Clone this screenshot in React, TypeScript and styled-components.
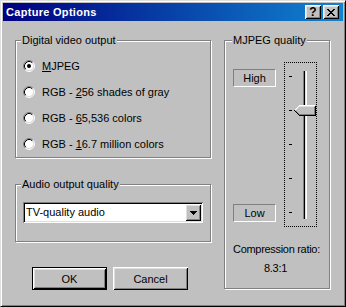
import React from "react";
import styled, { createGlobalStyle } from "styled-components";

const GlobalStyle = createGlobalStyle`
  html, body {
    margin: 0;
    padding: 0;
    background: #c0c0c0;
  }
  body {
    font-family: "Liberation Sans", Arial, sans-serif;
    font-size: 11px;
  }
`;

const raised = `
  box-shadow: inset 1px 1px #fff, inset -1px -1px #000, inset 2px 2px #dfdfdf,
    inset -2px -2px #808080;
`;

const sunken = `
  box-shadow: inset 1px 1px #808080, inset -1px -1px #fff, inset 2px 2px #000,
    inset -2px -2px #dfdfdf;
`;

const Window = styled.div`
  box-sizing: border-box;
  width: 346px;
  height: 307px;
  padding: 2px;
  background: #c0c0c0;
  border: 1px solid;
  border-color: #dfdfdf #000 #000 #dfdfdf;
  box-shadow: inset 1px 1px #fff, inset -1px -1px #808080;
  display: flex;
  flex-direction: column;
  color: #000;
  font-family: "Liberation Sans", Arial, sans-serif;
  font-size: 11px;
`;

const TitleBar = styled.div`
  height: 18px;
  flex-shrink: 0;
  display: flex;
  align-items: center;
  gap: 2px;
  padding: 0 4px 0 3px;
  background: linear-gradient(to right, #000080, #1084d0);
`;

const TitleText = styled.div`
  flex: 1;
  color: #fff;
  font-weight: bold;
  font-size: 11px;
  letter-spacing: 0.3px;
  line-height: 18px;
  white-space: nowrap;
`;

const CaptionButton = styled.div`
  box-sizing: border-box;
  width: 16px;
  height: 14px;
  background: #c0c0c0;
  ${raised}
  display: flex;
  align-items: center;
  justify-content: center;
  font-weight: bold;
  font-size: 12px;
  line-height: 14px;
  color: #000;
`;

const Body = styled.div`
  display: flex;
  align-items: flex-start;
  gap: 13px;
  padding: 19px 0 0 12px;
`;

const LeftColumn = styled.div`
  width: 196px;
  display: flex;
  flex-direction: column;
`;

const Group = styled.div`
  position: relative;
  box-sizing: border-box;
  border: 1px solid #808080;
  box-shadow: inset 1px 1px #fff, 1px 1px #fff;
`;

const GroupLabel = styled.span<{ $left: number }>`
  position: absolute;
  top: -7px;
  left: ${(p) => p.$left}px;
  padding: 0 1px;
  background: #c0c0c0;
  line-height: 13px;
  white-space: nowrap;
`;

const RadioList = styled.div`
  display: flex;
  flex-direction: column;
  gap: 10px;
  padding: 17px 0 5px 7px;
`;

const RadioRow = styled.div`
  display: flex;
  align-items: center;
  gap: 7px;
  height: 16px;
  line-height: 13px;
  white-space: nowrap;

  u {
    text-underline-offset: 1px;
  }
`;

const AudioGroup = styled(Group)`
  margin-top: 26px;
  padding: 17px 7px 18px;
`;

const Combo = styled.div`
  box-sizing: border-box;
  height: 21px;
  padding: 2px;
  background: #fff;
  ${sunken}
  display: flex;
  align-items: center;
`;

const ComboText = styled.span`
  flex: 1;
  padding-left: 1px;
  line-height: 13px;
`;

const DropButton = styled.div`
  box-sizing: border-box;
  width: 16px;
  height: 17px;
  background: #c0c0c0;
  ${raised}
  display: flex;
  align-items: center;
  justify-content: center;
`;

const ButtonRow = styled.div`
  display: flex;
  gap: 6px;
  margin-top: 25px;
  padding-left: 17px;
`;

const PushButton = styled.button<{ $default?: boolean }>`
  box-sizing: border-box;
  width: 75px;
  height: 23px;
  padding: 0;
  background: #c0c0c0;
  color: #000;
  font-family: "Liberation Sans", Arial, sans-serif;
  font-size: 11px;
  border: ${(p) => (p.$default ? "1px solid #000" : "none")};
  ${raised}
`;

const QualityGroup = styled(Group)`
  width: 106px;
  height: 249px;
  padding: 21px 11px 0 8px;
`;

const SliderRow = styled.div`
  display: flex;
  gap: 8px;
`;

const LevelColumn = styled.div`
  width: 43px;
  display: flex;
  flex-direction: column;
  justify-content: space-between;
  padding: 7px 0 5px;
`;

const LevelBox = styled.div`
  box-sizing: border-box;
  height: 18px;
  border: 1px solid;
  border-color: #808080 #fff #fff #808080;
  display: flex;
  align-items: center;
  justify-content: center;
  line-height: 13px;
`;

const SliderFrame = styled.div`
  box-sizing: border-box;
  width: 33px;
  height: 165px;
  border: 1px dotted #000;
`;

const RatioText = styled.div`
  margin-top: 13px;
  text-align: center;
  line-height: 19px;
  letter-spacing: -0.3px;
  white-space: nowrap;
`;

const videoOptions = [
  { pre: "", key: "M", post: "JPEG", checked: true },
  { pre: "RGB - ", key: "2", post: "56 shades of gray", checked: false },
  { pre: "RGB - ", key: "6", post: "5,536 colors", checked: false },
  { pre: "RGB - ", key: "1", post: "6.7 million colors", checked: false },
];

const ticks = [13, 47, 81, 115, 149];

function Radio({ checked }: { checked: boolean }) {
  return (
    <svg width="12" height="12" viewBox="0 0 12 12">
      <circle cx="6" cy="6" r="4.5" fill="#fff" />
      <path d="M2.11 9.89 A5.5 5.5 0 0 1 9.89 2.11" fill="none" stroke="#808080" />
      <path d="M9.89 2.11 A5.5 5.5 0 0 1 2.11 9.89" fill="none" stroke="#fff" />
      <path d="M2.82 9.18 A4.5 4.5 0 0 1 9.18 2.82" fill="none" stroke="#000" />
      <path d="M9.18 2.82 A4.5 4.5 0 0 1 2.82 9.18" fill="none" stroke="#dfdfdf" />
      {checked && <circle cx="6" cy="6" r="2" fill="#000" />}
    </svg>
  );
}

function Slider() {
  return (
    <SliderFrame>
      <svg width="31" height="163" viewBox="0 0 31 163" shapeRendering="crispEdges">
        <rect x="18" y="8" width="1" height="148" fill="#808080" />
        <rect x="19" y="8" width="1" height="148" fill="#000" />
        <rect x="20" y="8" width="1" height="148" fill="#dfdfdf" />
        <rect x="21" y="8" width="1" height="148" fill="#fff" />
        {ticks.map((y) => (
          <rect key={y} x="4" y={y} width="3" height="1" fill="#000" />
        ))}
        <polygon points="9.5,47.5 14.5,42.5 30.5,42.5 30.5,52.5 14.5,52.5" fill="#c0c0c0" />
        <polyline points="9.5,47.5 14.5,42.5 29.5,42.5" fill="none" stroke="#fff" />
        <polyline points="10.5,47.5 14.5,43.5 28.5,43.5" fill="none" stroke="#dfdfdf" />
        <polyline points="29.5,43.5 29.5,51.5 14.5,51.5 11.5,48.5" fill="none" stroke="#808080" />
        <polyline points="30.5,42.5 30.5,52.5 14.5,52.5 9.5,47.5" fill="none" stroke="#000" />
      </svg>
    </SliderFrame>
  );
}

export default function App() {
  return (
    <>
      <GlobalStyle />
      <Window>
        <TitleBar>
          <TitleText>Capture Options</TitleText>
          <CaptionButton>?</CaptionButton>
          <CaptionButton>
            <svg width="8" height="7" viewBox="0 0 8 7">
              <path
                d="M0 0h2v1H0zM6 0h2v1H6zM1 1h2v1H1zM5 1h2v1H5zM2 2h4v1H2zM3 3h2v1H3zM2 4h4v1H2zM1 5h2v1H1zM5 5h2v1H5zM0 6h2v1H0zM6 6h2v1H6z"
                fill="#000"
              />
            </svg>
          </CaptionButton>
        </TitleBar>

        <Body>
          <LeftColumn>
            <Group>
              <GroupLabel $left={5}>Digital video output</GroupLabel>
              <RadioList>
                {videoOptions.map((o) => (
                  <RadioRow key={o.key}>
                    <Radio checked={o.checked} />
                    <span>
                      {o.pre}
                      <u>{o.key}</u>
                      {o.post}
                    </span>
                  </RadioRow>
                ))}
              </RadioList>
            </Group>

            <AudioGroup>
              <GroupLabel $left={5}>Audio output quality</GroupLabel>
              <Combo>
                <ComboText>TV-quality audio</ComboText>
                <DropButton>
                  <svg width="7" height="4" viewBox="0 0 7 4">
                    <path d="M0 0h7v1H0zM1 1h5v1H1zM2 2h3v1H2zM3 3h1v1H3z" fill="#000" />
                  </svg>
                </DropButton>
              </Combo>
            </AudioGroup>

            <ButtonRow>
              <PushButton $default>OK</PushButton>
              <PushButton>Cancel</PushButton>
            </ButtonRow>
          </LeftColumn>

          <QualityGroup>
            <GroupLabel $left={7}>MJPEG quality</GroupLabel>
            <SliderRow>
              <LevelColumn>
                <LevelBox>High</LevelBox>
                <LevelBox>Low</LevelBox>
              </LevelColumn>
              <Slider />
            </SliderRow>
            <RatioText>
              Compression ratio:
              <br />
              8.3:1
            </RatioText>
          </QualityGroup>
        </Body>
      </Window>
    </>
  );
}
